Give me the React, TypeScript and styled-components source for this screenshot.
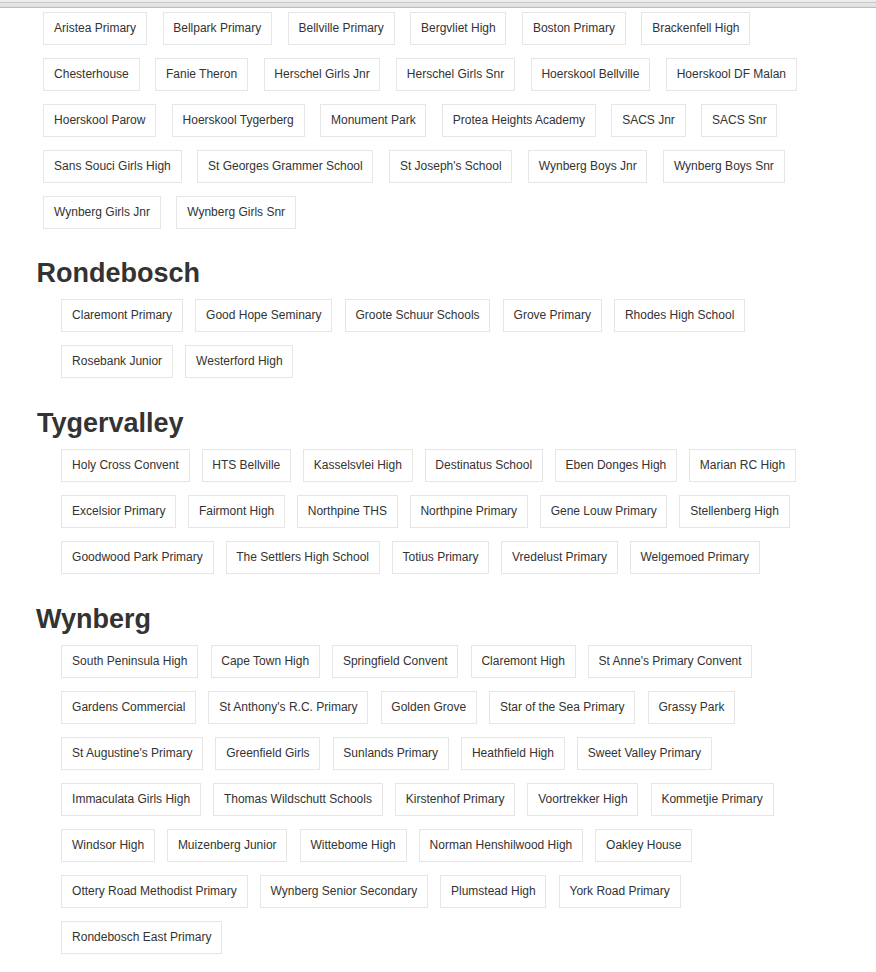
import React from "react";
import styled, { createGlobalStyle } from "styled-components";

const GlobalStyle = createGlobalStyle`
  html, body { margin: 0; padding: 0; background: #ffffff; }
  body { font-family: "Liberation Sans", Arial, sans-serif; color: #333333; }
`;

const TopBar = styled.div`
  background: #ececec;
  padding-top: 2px;
`;

const TopBarBand = styled.div`
  height: 4px;
  background: linear-gradient(#e8e8e8, #dedede);
  border-top: 1px solid #c6c6c6;
  border-bottom: 1px solid #bcbcbc;
`;

const Page = styled.main`
  padding: 0 46px 40px 0;
`;

const List = styled.ul<{ $indent: number; $gap: number; $top?: number }>`
  list-style: none;
  margin: ${(p) => p.$top ?? 0}px 0 0 ${(p) => p.$indent}px;
  padding: 0;
  display: flex;
  flex-wrap: wrap;
  row-gap: 13px;
  column-gap: ${(p) => p.$gap}px;
`;

const Chip = styled.li`
  box-sizing: border-box;
  height: 33px;
  line-height: 31px;
  padding: 0 9.75px;
  border: 1px solid #e6e6e6;
  background: #ffffff;
  font-size: 12px;
  color: #333333;
  white-space: nowrap;
`;

const Heading = styled.h2<{ $indent: number }>`
  margin: 29.7px 0 11px ${(p) => p.$indent}px;
  font-size: 27px;
  line-height: 30px;
  font-weight: 700;
  color: #333333;
`;

const top = [
  "Aristea Primary", "Bellpark Primary", "Bellville Primary", "Bergvliet High", "Boston Primary", "Brackenfell High",
  "Chesterhouse", "Fanie Theron", "Herschel Girls Jnr", "Herschel Girls Snr", "Hoerskool Bellville", "Hoerskool DF Malan",
  "Hoerskool Parow", "Hoerskool Tygerberg", "Monument Park", "Protea Heights Academy", "SACS Jnr", "SACS Snr",
  "Sans Souci Girls High", "St Georges Grammer School", "St Joseph's School", "Wynberg Boys Jnr", "Wynberg Boys Snr",
  "Wynberg Girls Jnr", "Wynberg Girls Snr",
];

const sections: { name: string; indent: number; gap: number; schools: string[] }[] = [
  {
    name: "Rondebosch",
    indent: 36.5,
    gap: 12.5,
    schools: [
      "Claremont Primary", "Good Hope Seminary", "Groote Schuur Schools", "Grove Primary", "Rhodes High School",
      "Rosebank Junior", "Westerford High",
    ],
  },
  {
    name: "Tygervalley",
    indent: 37,
    gap: 12,
    schools: [
      "Holy Cross Convent", "HTS Bellville", "Kasselsvlei High", "Destinatus School", "Eben Donges High", "Marian RC High",
      "Excelsior Primary", "Fairmont High", "Northpine THS", "Northpine Primary", "Gene Louw Primary", "Stellenberg High",
      "Goodwood Park Primary", "The Settlers High School", "Totius Primary", "Vredelust Primary", "Welgemoed Primary",
    ],
  },
  {
    name: "Wynberg",
    indent: 36,
    gap: 12.3,
    schools: [
      "South Peninsula High", "Cape Town High", "Springfield Convent", "Claremont High", "St Anne's Primary Convent",
      "Gardens Commercial", "St Anthony's R.C. Primary", "Golden Grove", "Star of the Sea Primary", "Grassy Park",
      "St Augustine's Primary", "Greenfield Girls", "Sunlands Primary", "Heathfield High", "Sweet Valley Primary",
      "Immaculata Girls High", "Thomas Wildschutt Schools", "Kirstenhof Primary", "Voortrekker High", "Kommetjie Primary",
      "Windsor High", "Muizenberg Junior", "Wittebome High", "Norman Henshilwood High", "Oakley House",
      "Ottery Road Methodist Primary", "Wynberg Senior Secondary", "Plumstead High", "York Road Primary",
      "Rondebosch East Primary",
    ],
  },
];

export default function App() {
  return (
    <>
      <GlobalStyle />
      <TopBar>
        <TopBarBand />
      </TopBar>
      <Page>
        <List $indent={43.3} $gap={15.7} $top={3.5}>
          {top.map((s) => (
            <Chip key={s}>{s}</Chip>
          ))}
        </List>
        {sections.map((sec) => (
          <section key={sec.name}>
            <Heading $indent={sec.indent}>{sec.name}</Heading>
            <List $indent={61.3} $gap={sec.gap}>
              {sec.schools.map((s) => (
                <Chip key={s}>{s}</Chip>
              ))}
            </List>
          </section>
        ))}
      </Page>
    </>
  );
}
